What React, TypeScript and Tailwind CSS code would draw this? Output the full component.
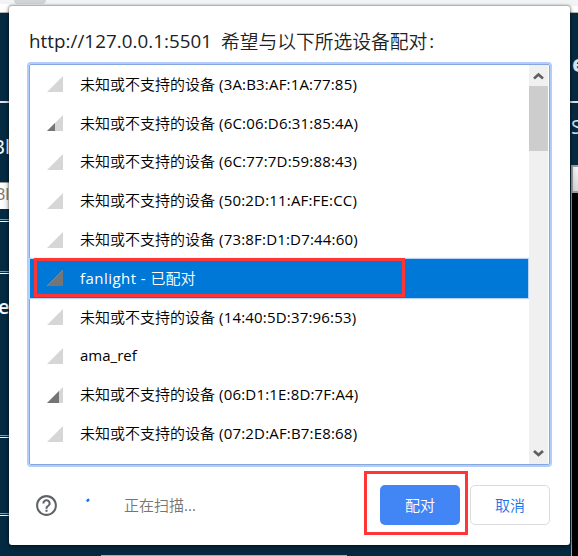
import type { ReactNode } from "react";

type Device = { cjk?: string; latin: string; level: number; selected?: boolean };

const unknown = "未知或不支持的设备";
const devices: Device[] = [
  { cjk: unknown, latin: "(3A:B3:AF:1A:77:85)", level: 0 },
  { cjk: unknown, latin: "(6C:06:D6:31:85:4A)", level: 8 },
  { cjk: unknown, latin: "(6C:77:7D:59:88:43)", level: 0 },
  { cjk: unknown, latin: "(50:2D:11:AF:FE:CC)", level: 0 },
  { cjk: unknown, latin: "(73:8F:D1:D7:44:60)", level: 0 },
  { latin: "fanlight - ", cjk: "已配对", level: 16, selected: true },
  { cjk: unknown, latin: "(14:40:5D:37:96:53)", level: 0 },
  { latin: "ama_ref", level: 0 },
  { cjk: unknown, latin: "(06:D1:1E:8D:7F:A4)", level: 12 },
  { cjk: unknown, latin: "(07:2D:AF:B7:E8:68)", level: 0 },
];

function Signal({ level }: { level: number }) {
  return (
    <svg className="h-4 w-4 shrink-0" viewBox="0 0 16 16">
      <path d="M0 16 16 0V16Z" fill="#d6d6d6" />
      {level > 0 && <path d={`M0 16 ${level} ${16 - level}V16Z`} fill="#757575" />}
    </svg>
  );
}

function Cjk({ children }: { children: ReactNode }) {
  return <span className="font-['Noto_Sans_CJK_SC',sans-serif] font-[350] tracking-normal">{children}</span>;
}

function Row({ device }: { device: Device }) {
  const { cjk, latin, level, selected } = device;
  return (
    <div
      className={
        "flex h-[38.8px] items-center pl-[17px] text-[15px] whitespace-pre " +
        (selected ? "bg-[#0078d7] text-white shadow-[0_0_1px_1px_#b9d3f4]" : "text-black")
      }
    >
      <Signal level={level} />
      <span className="mb-[1px] ml-[17px] leading-5 tracking-[0.18px]">
        {selected ? (
          <>
            <span className="tracking-[0.45px]">{latin}</span>
            <Cjk>{cjk}</Cjk>
          </>
        ) : cjk ? (
          <>
            <Cjk>{cjk}</Cjk> {latin}
          </>
        ) : (
          <span className="tracking-normal">{latin}</span>
        )}
      </span>
    </div>
  );
}

function Rule() {
  return <div className="h-[3px] shrink-0 border-y border-t-[#8e9ba3] border-b-white" />;
}

function Backdrop() {
  return (
    <div className="flex h-full flex-col bg-[#052b43]">
      <div className="flex h-[13px] shrink-0 flex-col border-b border-[#b5b5b5] bg-[#f1f3f4]">
        <div className="ml-[14px] h-1 w-8 rounded-b-full bg-[#d1d3d4]" />
        <div className="flex h-2 justify-between">
          <div className="w-[10px] bg-white" />
          <div className="mt-[2px] w-[10px] bg-white" />
        </div>
      </div>
      <div className="flex min-h-0 flex-1 justify-between">
        <div className="flex w-[9px] flex-col overflow-hidden text-white">
          <div className="h-[88px] shrink-0" />
          <div className="h-[2px] shrink-0 bg-[#e2e5e8]" />
          <div className="flex h-[79px] shrink-0 items-center pt-2">
            <span className="ml-[-8px] text-[20px] whitespace-nowrap">Bl</span>
          </div>
          <div className="flex h-[27px] shrink-0 items-center border-t border-[#999] bg-white text-[#777]">
            <span className="ml-[-5px] pb-1 text-[16px]">Bl</span>
          </div>
          <div className="h-[10px] shrink-0" />
          <Rule />
          <div className="h-[49px] shrink-0" />
          <Rule />
          <div className="h-[66px] shrink-0 pt-[18px]">
            <span className="ml-[-2px] block text-[20px] leading-[30px] font-semibold">e</span>
          </div>
          <div className="h-[95px] shrink-0" />
          <Rule />
          <div className="h-[75px] shrink-0" />
          <Rule />
        </div>
        <div className="flex w-[8px] flex-col overflow-hidden text-[#d8e9f5]">
          <div className="h-[88px] shrink-0 pt-[33px]">
            <span className="ml-[2px] block text-[24px] leading-[34px] font-bold">e</span>
          </div>
          <div className="h-[2px] shrink-0 bg-[#e2e5e8]" />
          <div className="h-[62px] shrink-0 pt-[9px]">
            <span className="ml-px block text-[20px] leading-[30px]">S</span>
          </div>
          <div className="ml-px h-[28px] shrink-0 border-2 border-r-0 border-[#a0a0a0] bg-linear-to-b from-[#f5f5f5] to-[#d8d8d8]" />
          <div className="ml-px flex-1 border-l border-[#a0a0a0] bg-black" />
        </div>
      </div>
    </div>
  );
}

export default function App() {
  return (
    <div className="relative h-[556px] w-[578px] overflow-hidden font-['Open_Sans','Noto_Sans_CJK_SC',sans-serif]">
      <Backdrop />
      <div className="absolute bottom-0 left-[101px] h-px w-[246px] bg-[#a5afb6]" />
      <div className="absolute top-[6px] left-[9px] flex h-[539px] w-[561px] flex-col rounded-[3px] bg-white px-5 shadow-[0_0_2px_1px_rgba(0,0,0,0.3),0_3px_7px_rgba(0,0,0,0.35)]">
        <h1 className="flex h-[58px] shrink-0 items-center pt-[12px] text-[18.75px] whitespace-pre text-[#202124]">
          <span className="tracking-[0.05px]">http://127.0.0.1:5501 </span>
          <span className="ml-[4px] font-['Noto_Sans_CJK_SC',sans-serif] font-[350]">希望与以下所选设备配对</span>
          <span className="ml-[2px]">:</span>
        </h1>
        <div className="flex h-[401px] w-[521px] shrink-0 rounded-[2px] border border-[#86a7dd] shadow-[0_0_0_2px_#b3cdfa]">
          <div className="w-[497.5px]">
            {devices.map((device, i) => (
              <Row key={i} device={device} />
            ))}
          </div>
          <div className="ml-[1.5px] flex w-[19px] flex-col items-center bg-[#f0f0f0]">
            <svg className="h-[21px] w-[19px] shrink-0" viewBox="0 0 19 21">
              <path d="M5 13.500 9.500 9.500 14 13.500" fill="none" stroke="#606060" strokeWidth="2.6" />
            </svg>
            <div className="h-[65px] w-full bg-[#cdcdcd]" />
            <svg className="mt-auto h-[20px] w-[19px] shrink-0" viewBox="0 0 19 20">
              <path d="M5 7 9.5 11 14 7" fill="none" stroke="#606060" strokeWidth="2.8" />
            </svg>
          </div>
        </div>
        <div className="flex h-20 items-center text-[15px]">
          <svg className="ml-[5px] h-[25px] w-[25px]" viewBox="0 0 24 24" fill="#5f6368">
            <path d="M11 18h2v-2h-2v2zm1-16C6.480 2 2 6.480 2 12s4.480 10 10 10 10-4.480 10-10S17.520 2 12 2zm0 18c-4.410 0-8-3.590-8-8s3.590-8 8-8 8 3.590 8 8-3.590 8-8 8zm0-14c-2.210 0-4 1.790-4 4h2c0-1.100.9-2 2-2s2 .9 2 2c0 2-3 1.750-3 5h2c0-2.250 3-2.500 3-5 0-2.210-1.790-4-4-4z" />
          </svg>
          <svg className="ml-[26px] h-5 w-5" viewBox="0 0 20 20">
            <path d="M2.600 5.600 3.200 5" stroke="#1a73e8" strokeWidth="2.700" strokeLinecap="round" />
          </svg>
          <span className="ml-[19px] text-[#757575]">
            <Cjk>正在扫描</Cjk>...
          </span>
          <button className="ml-auto h-10 w-20 rounded-[5px] bg-[#4285f4] text-white">
            <Cjk>配对</Cjk>
          </button>
          <button className="ml-[10px] h-10 w-20 rounded-[5px] border border-[#dadce0] text-[#1a73e8]">
            <Cjk>取消</Cjk>
          </button>
        </div>
      </div>
      <div className="absolute top-[258px] left-[34px] h-[39px] w-[371px] border-3 border-[#ff3636]" />
      <div className="absolute top-[471px] left-[364px] h-[64px] w-[104px] border-3 border-[#ff3636]" />
    </div>
  );
}
